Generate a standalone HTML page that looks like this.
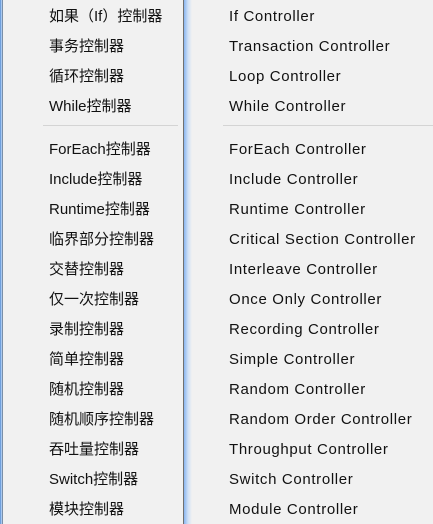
<!DOCTYPE html>
<html><head><meta charset="utf-8"><style>
body{margin:0;width:433px;height:524px;overflow:hidden;background:#f1f1f1;position:relative;font-family:"Microsoft YaHei","Liberation Sans","Noto Sans CJK SC",sans-serif;font-size:15px;color:#111}
.e0{position:absolute;left:0;top:0;width:1px;height:524px;background:#6f9fdc}
.e1{position:absolute;left:1px;top:0;width:1px;height:524px;background:#a8c8f0}
.e2{position:absolute;left:2px;top:0;width:1px;height:524px;background:#7a8fa8}
.mid{position:absolute;left:183px;top:0;width:1px;height:524px;background:#707070}
.grad{position:absolute;left:184px;top:0;width:8px;height:524px;background:linear-gradient(to right,#8ab6f0,#cfe0f6 50%,#f1f1f1)}
.sep{position:absolute;height:1px;background:#d4d4d4;top:125px}
.t{position:absolute;white-space:nowrap;line-height:20px;margin-top:2px}
.r{letter-spacing:0.65px}
</style></head><body>
<div class="e0"></div><div class="e1"></div><div class="e2"></div>
<div class="mid"></div><div class="grad"></div>
<div class="sep" style="left:43px;width:135px"></div>
<div class="sep" style="left:223px;width:210px"></div>
<div class="t" style="left:49px;top:5px">如果（If）控制器</div>
<div class="t" style="left:49px;top:35px">事务控制器</div>
<div class="t" style="left:49px;top:65px">循环控制器</div>
<div class="t" style="left:49px;top:95px">While控制器</div>
<div class="t" style="left:49px;top:138px">ForEach控制器</div>
<div class="t" style="left:49px;top:168px">Include控制器</div>
<div class="t" style="left:49px;top:198px">Runtime控制器</div>
<div class="t" style="left:49px;top:228px">临界部分控制器</div>
<div class="t" style="left:49px;top:258px">交替控制器</div>
<div class="t" style="left:49px;top:288px">仅一次控制器</div>
<div class="t" style="left:49px;top:318px">录制控制器</div>
<div class="t" style="left:49px;top:348px">简单控制器</div>
<div class="t" style="left:49px;top:378px">随机控制器</div>
<div class="t" style="left:49px;top:408px">随机顺序控制器</div>
<div class="t" style="left:49px;top:438px">吞吐量控制器</div>
<div class="t" style="left:49px;top:468px">Switch控制器</div>
<div class="t" style="left:49px;top:498px">模块控制器</div>
<div class="t r" style="left:229px;top:5px">If Controller</div>
<div class="t r" style="left:229px;top:35px">Transaction Controller</div>
<div class="t r" style="left:229px;top:65px">Loop Controller</div>
<div class="t r" style="left:229px;top:95px">While Controller</div>
<div class="t r" style="left:229px;top:138px">ForEach Controller</div>
<div class="t r" style="left:229px;top:168px">Include Controller</div>
<div class="t r" style="left:229px;top:198px">Runtime Controller</div>
<div class="t r" style="left:229px;top:228px">Critical Section Controller</div>
<div class="t r" style="left:229px;top:258px">Interleave Controller</div>
<div class="t r" style="left:229px;top:288px">Once Only Controller</div>
<div class="t r" style="left:229px;top:318px">Recording Controller</div>
<div class="t r" style="left:229px;top:348px">Simple Controller</div>
<div class="t r" style="left:229px;top:378px">Random Controller</div>
<div class="t r" style="left:229px;top:408px">Random Order Controller</div>
<div class="t r" style="left:229px;top:438px">Throughput Controller</div>
<div class="t r" style="left:229px;top:468px">Switch Controller</div>
<div class="t r" style="left:229px;top:498px">Module Controller</div>
</body></html>
